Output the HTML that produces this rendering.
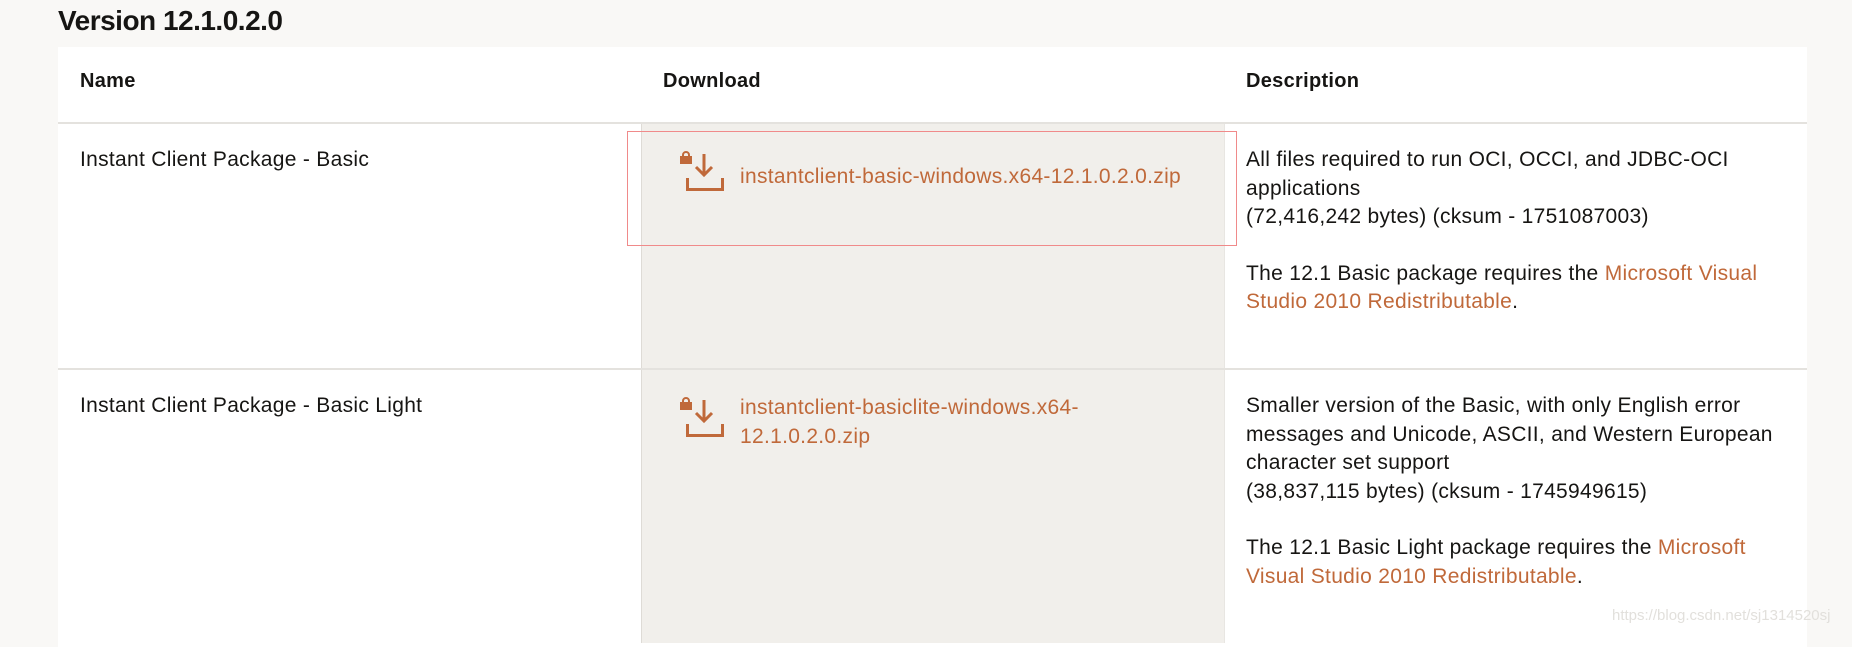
<!DOCTYPE html>
<html><head><meta charset="utf-8"><style>
body{margin:0;width:1852px;height:635px;background:#f9f8f6;font-family:"Liberation Sans",sans-serif;color:#161513;position:relative;overflow:hidden}
.a{position:absolute}
.t{font-size:21px;line-height:28.5px;letter-spacing:0.3px}
.h{font-size:20px;line-height:28.5px;font-weight:bold;letter-spacing:0.3px}
.o{color:#c0693a}
p{margin:0}
</style></head><body>
<div class="a" style="left:58px;top:3px;font-size:28px;font-weight:bold;line-height:36px;letter-spacing:-0.5px">Version 12.1.0.2.0</div>
<div class="a" style="left:58px;top:47px;width:1749px;height:600px;background:#fff"></div>
<div class="a" style="left:641px;top:123px;width:584px;height:520px;background:#f1efeb;border-left:1px solid #dedbd6;border-right:1px solid #e8e6e2;box-sizing:border-box"></div>
<div class="a" style="left:58px;top:122px;width:1749px;height:2px;background:#e4e2de"></div>
<div class="a" style="left:58px;top:368px;width:1749px;height:2px;background:#e4e2de"></div>
<div class="a h" style="left:80px;top:67px">Name</div>
<div class="a h" style="left:663px;top:67px">Download</div>
<div class="a h" style="left:1246px;top:67px">Description</div>

<div class="a t" style="left:80px;top:146px">Instant Client Package - Basic</div>
<div class="a t" style="left:80px;top:392px">Instant Client Package - Basic Light</div>

<svg class="a" style="left:678px;top:150px" width="48" height="44" viewBox="0 0 48 44"><rect x="2" y="6" width="12" height="8" fill="#c0693a"/><path d="M5 7V5a3 3 0 0 1 6 0v2" stroke="#c0693a" stroke-width="2" fill="none"/><path d="M26 4V25M18 17l8 8 8-8" stroke="#c0693a" stroke-width="3" fill="none"/><path d="M9.5 28v11.5h35V28" stroke="#c0693a" stroke-width="3" fill="none"/></svg>
<div class="a t o" style="left:740px;top:163px;white-space:nowrap">instantclient-basic-windows.x64-12.1.0.2.0.zip</div>
<div class="a" style="left:627px;top:131px;width:610px;height:115px;border:1px solid #f08a8a;box-sizing:border-box"></div>

<svg class="a" style="left:678px;top:396px" width="48" height="44" viewBox="0 0 48 44"><rect x="2" y="6" width="12" height="8" fill="#c0693a"/><path d="M5 7V5a3 3 0 0 1 6 0v2" stroke="#c0693a" stroke-width="2" fill="none"/><path d="M26 4V25M18 17l8 8 8-8" stroke="#c0693a" stroke-width="3" fill="none"/><path d="M9.5 28v11.5h35V28" stroke="#c0693a" stroke-width="3" fill="none"/></svg>
<div class="a t o" style="left:740px;top:394px;white-space:nowrap">instantclient-basiclite-windows.x64-<br>12.1.0.2.0.zip</div>

<div class="a t" style="left:1246px;top:146px;width:548px">All files required to run OCI, OCCI, and JDBC-OCI applications<br>(72,416,242 bytes) (cksum - 1751087003)<p style="margin-top:28px">The 12.1 Basic package requires the <span class="o">Microsoft Visual Studio 2010 Redistributable</span>.</p></div>
<div class="a t" style="left:1246px;top:392px;width:548px">Smaller version of the Basic, with only English error messages and Unicode, ASCII, and Western European character set support<br>(38,837,115 bytes) (cksum - 1745949615)<p style="margin-top:28px">The 12.1 Basic Light package requires the <span class="o">Microsoft Visual Studio 2010 Redistributable</span>.</p></div>
<div class="a" style="left:1612px;top:607px;font-size:15px;color:#e2e0dc">https://blog.csdn.net/sj1314520sj</div>
</body></html>
